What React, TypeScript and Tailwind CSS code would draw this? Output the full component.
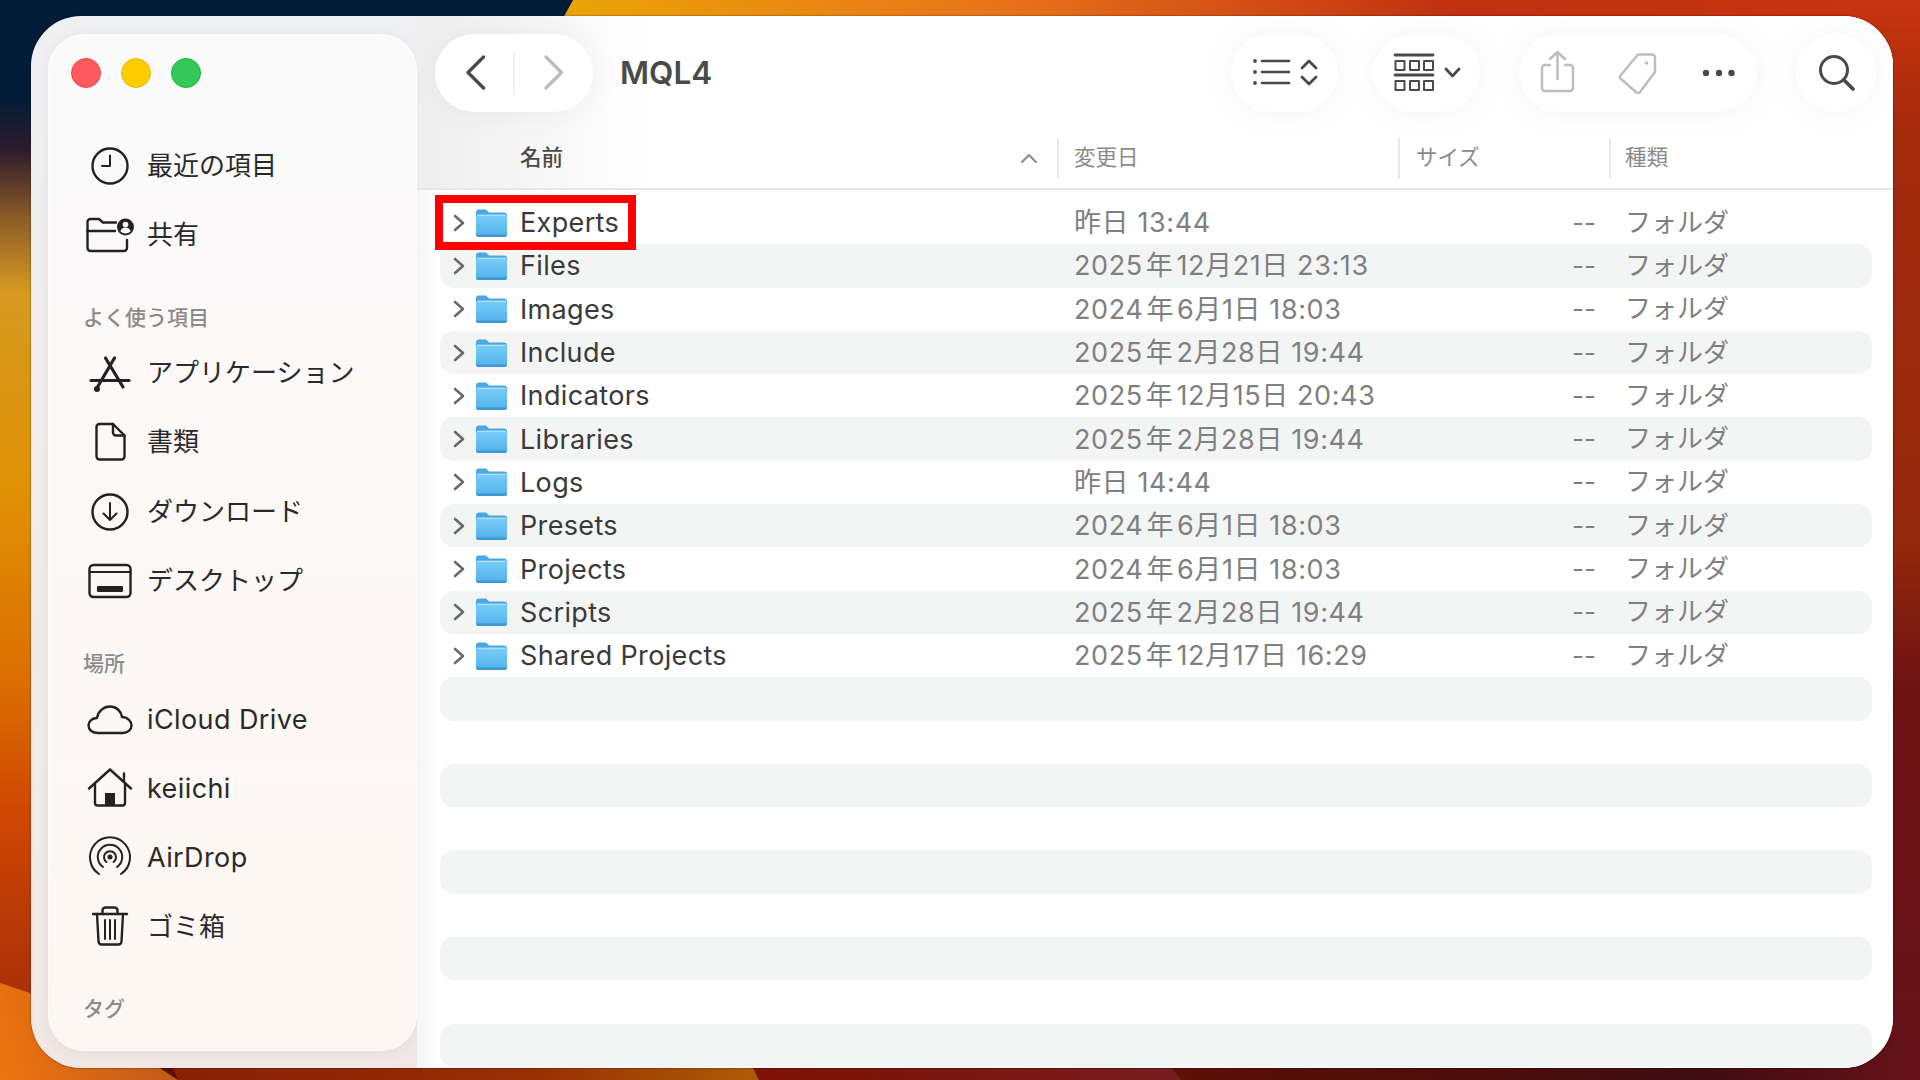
import type { ReactNode } from 'react';

const FOLDERS = [
  { name: 'Experts', date: '昨日 13:44' },
  { name: 'Files', date: '2025年12月21日 23:13' },
  { name: 'Images', date: '2024年6月1日 18:03' },
  { name: 'Include', date: '2025年2月28日 19:44' },
  { name: 'Indicators', date: '2025年12月15日 20:43' },
  { name: 'Libraries', date: '2025年2月28日 19:44' },
  { name: 'Logs', date: '昨日 14:44' },
  { name: 'Presets', date: '2024年6月1日 18:03' },
  { name: 'Projects', date: '2024年6月1日 18:03' },
  { name: 'Scripts', date: '2025年2月28日 19:44' },
  { name: 'Shared Projects', date: '2025年12月17日 16:29' },
];

const ROW_COUNT = 20;
const COLUMNS = 'grid grid-cols-[617px_341px_211px_1fr]';

function Wallpaper() {
  return (
    <svg className="absolute inset-0 h-full w-full" viewBox="0 0 1920 1080" aria-hidden="true">
      <defs>
        <linearGradient id="left" x1="0" y1="0" x2="0" y2="1080" gradientUnits="userSpaceOnUse">
          <stop offset="0.09" stopColor="#001c36" />
          <stop offset="0.14" stopColor="#2f1c2c" />
          <stop offset="0.2" stopColor="#8a5a28" />
          <stop offset="0.27" stopColor="#d69a20" />
          <stop offset="0.45" stopColor="#e09206" />
          <stop offset="0.64" stopColor="#da6c02" />
          <stop offset="0.75" stopColor="#cf4703" />
          <stop offset="0.92" stopColor="#ab3008" />
        </linearGradient>
        <linearGradient id="top" x1="560" y1="0" x2="1920" y2="0" gradientUnits="userSpaceOnUse">
          <stop offset="0" stopColor="#eaa406" />
          <stop offset="0.32" stopColor="#e8741a" />
          <stop offset="0.66" stopColor="#bf3010" />
          <stop offset="1" stopColor="#c8340f" />
        </linearGradient>
        <linearGradient id="right" x1="0" y1="0" x2="0" y2="1080" gradientUnits="userSpaceOnUse">
          <stop offset="0" stopColor="#c8340f" />
          <stop offset="0.12" stopColor="#a52a0c" />
          <stop offset="0.5" stopColor="#93280b" />
          <stop offset="0.64" stopColor="#6e1214" />
          <stop offset="1" stopColor="#66121a" />
        </linearGradient>
        <linearGradient id="bottomA" x1="178" y1="0" x2="759" y2="0" gradientUnits="userSpaceOnUse">
          <stop offset="0" stopColor="#872006" />
          <stop offset="0.6" stopColor="#982e04" />
          <stop offset="1" stopColor="#ad5c06" />
        </linearGradient>
        <linearGradient id="bottomB" x1="759" y1="0" x2="1181" y2="0" gradientUnits="userSpaceOnUse">
          <stop offset="0" stopColor="#7e1204" />
          <stop offset="1" stopColor="#761c1e" />
        </linearGradient>
        <linearGradient id="bottomC" x1="1181" y1="0" x2="1920" y2="0" gradientUnits="userSpaceOnUse">
          <stop offset="0" stopColor="#5c1006" />
          <stop offset="0.7" stopColor="#3e0c10" />
          <stop offset="1" stopColor="#66121a" />
        </linearGradient>
        <linearGradient id="corner" x1="0" y1="1080" x2="180" y2="1020" gradientUnits="userSpaceOnUse">
          <stop offset="0" stopColor="#ef750e" />
          <stop offset="1" stopColor="#b9561c" />
        </linearGradient>
      </defs>
      <rect width="1920" height="1080" fill="#001c36" />
      <rect width="60" height="1080" fill="url(#left)" />
      <polygon points="573,0 1920,0 1920,40 551,40" fill="url(#top)" />
      <rect x="1860" width="60" height="1080" fill="url(#right)" />
      <rect y="1040" width="1920" height="40" fill="url(#bottomC)" />
      <polygon points="160,1040 740,1040 759,1080 178,1080" fill="url(#bottomA)" />
      <polygon points="740,1040 1150,1040 1181,1080 759,1080" fill="url(#bottomB)" />
      <polygon points="0,983 60,1003 178,1080 0,1080" fill="url(#corner)" />
    </svg>
  );
}

function SideIcon({ children }: { children: ReactNode }) {
  return (
    <svg
      className="h-12 w-12 shrink-0"
      viewBox="0 0 48 48"
      fill="none"
      stroke="#222"
      strokeWidth="2.4"
      strokeLinecap="round"
      strokeLinejoin="round"
    >
      {children}
    </svg>
  );
}

function SideRow({ icon, label, latin }: { icon: ReactNode; label: string; latin?: boolean }) {
  return (
    <div className="flex h-[69.2px] items-center gap-[13px] pl-[37px] text-[26px] leading-none text-[#2a2a2a]">
      <SideIcon>{icon}</SideIcon>
      <span className={latin ? 'text-[27px] tracking-[0.4px]' : ''}>{label}</span>
    </div>
  );
}

function SideHeading({ label }: { label: string }) {
  return (
    <div className="flex h-[69.2px] items-end pb-[7px] pl-[34px] text-[21px] leading-[28px] font-medium text-[#8b8b8b]">
      {label}
    </div>
  );
}

function Sidebar() {
  return (
    <aside className="ml-[17px] mt-[18px] h-[1017px] w-[369px] shrink-0 overflow-hidden rounded-[36px] border border-white/70 bg-gradient-to-b from-[#fafafa] to-[#fef6f3] shadow-[0_2px_14px_rgba(60,40,40,0.06)]">
      <div className="flex h-[96px] items-start gap-[20px] pl-[22px] pt-[23px]">
        <span className="h-[30px] w-[30px] rounded-full border border-[#f0444c] bg-[#ff5a5f]" />
        <span className="h-[30px] w-[30px] rounded-full border border-[#eebf00] bg-[#fccb00]" />
        <span className="h-[30px] w-[30px] rounded-full border border-[#12b82f] bg-[#34c759]" />
      </div>
      <SideRow
        label="最近の項目"
        icon={
          <>
            <circle cx="24" cy="24" r="17.5" />
            <path d="M24 13.5V24H16" strokeWidth="2" />
          </>
        }
      />
      <SideRow
        label="共有"
        icon={
          <>
            <path d="M1.5 20V11a3 3 0 0 1 3-3h8.5l4 3.5H30" />
            <path d="M1.5 20H29M1.5 20v17a3 3 0 0 0 3 3H38a3 3 0 0 0 3-3v-8" />
            <circle cx="39.5" cy="16" r="8.5" fill="#222" stroke="none" />
            <circle cx="39.5" cy="13.5" r="2.8" fill="#fafafa" stroke="none" />
            <path d="M34.5 20.5a5 4 0 0 1 10 0a7 7 0 0 1-10 0z" fill="#fafafa" stroke="none" />
          </>
        }
      />
      <SideHeading label="よく使う項目" />
      <SideRow
        label="アプリケーション"
        icon={
          <g strokeWidth="3.2">
            <path d="M19.5 9L37 38" />
            <path d="M28.5 9L11.5 38" />
            <path d="M5 31.500H43" />
            <circle cx="11" cy="40" r="1.4" fill="#222" />
          </g>
        }
      />
      <SideRow
        label="書類"
        icon={
          <>
            <path d="M13.5 6H27L38.5 17.5V38.5a3 3 0 0 1-3 3h-22a3 3 0 0 1-3-3V9a3 3 0 0 1 3-3z" />
            <path d="M27 6v8.5a3 3 0 0 0 3 3h8.5" />
          </>
        }
      />
      <SideRow
        label="ダウンロード"
        icon={
          <>
            <circle cx="24" cy="24" r="17.5" />
            <path d="M24 15V32M17.5 25.5L24 32l6.5-6.5" strokeWidth="2" />
          </>
        }
      />
      <SideRow
        label="デスクトップ"
        icon={
          <>
            <rect x="3.5" y="8" width="41" height="32" rx="4" />
            <path d="M3.5 15H44.5" strokeWidth="2" />
            <rect x="11" y="29" width="26" height="6" rx="1" fill="#222" stroke="none" />
          </>
        }
      />
      <SideHeading label="場所" />
      <SideRow
        label="iCloud Drive"
        latin
        icon={
          <path d="M12 38C6 38 2.500 34.500 2.500 30.500C2.500 26 6.500 23 11 23C12 16 18 11.500 24 11.500C30.500 11.500 35 16 36 22C41.500 22 45.500 26 45.500 30.500C45.500 35 41.500 38 37 38Z" />
        }
      />
      <SideRow
        label="keiichi"
        latin
        icon={
          <>
            <path d="M3 24.500L24 5.500L45 24.500M38 17.500V9.500" />
            <path d="M9 20V39a2.500 2.500 0 0 0 2.500 2.500h25A2.500 2.500 0 0 0 39 39V20" />
            <rect x="19" y="29" width="10" height="12.500" fill="#222" stroke="none" />
          </>
        }
      />
      <SideRow
        label="AirDrop"
        latin
        icon={
          <>
            <path d="M13 41A20 20 0 1 1 35 41" strokeWidth="2" />
            <path d="M17 34A12.200 12.200 0 1 1 31 34" strokeWidth="2" />
            <path d="M20.500 29A6 6 0 1 1 27.500 29" strokeWidth="2" />
            <circle cx="24" cy="24" r="2.500" fill="#222" stroke="none" />
          </>
        }
      />
      <SideRow
        label="ゴミ箱"
        icon={
          <>
            <path d="M7 11H41" />
            <path d="M16.500 11V7.500a3 3 0 0 1 3-3h9a3 3 0 0 1 3 3V11" />
            <path d="M11 11L12.500 38.500a3 3 0 0 0 3 3h17a3 3 0 0 0 3-3L37 11" />
            <path d="M19 17V36M24 17V36M29 17V36" strokeWidth="2" />
          </>
        }
      />
      <SideHeading label="タグ" />
    </aside>
  );
}

function Pill({ width, children }: { width: string; children: ReactNode }) {
  return (
    <div
      className={`flex h-[78px] shrink-0 items-center justify-center rounded-full bg-white shadow-[0_0_34px_rgba(0,0,0,0.055)] ${width}`}
    >
      {children}
    </div>
  );
}

function Toolbar() {
  return (
    <div className="flex h-[96px] items-start pl-[18px] pr-[17px] pt-[18px]">
      <Pill width="w-[158px]">
        <svg width="158" height="78" viewBox="0 0 158 78" fill="none" strokeLinecap="round" strokeLinejoin="round">
          <path d="M48.500 23L33 38.500L48.500 54" stroke="#4a4a4a" strokeWidth="3.400" />
          <path d="M79 18V60" stroke="#ececec" strokeWidth="1.500" />
          <path d="M111 23L126.500 38.500L111 54" stroke="#bdbdbd" strokeWidth="3.400" />
        </svg>
      </Pill>
      <h1 className="ml-[27px] flex h-[78px] items-center text-[31.5px] font-semibold text-[#4a4a4a]">MQL4</h1>
      <div className="flex-1" />
      <Pill width="w-[107px]">
        <svg width="107" height="78" viewBox="0 0 107 78" fill="none" stroke="#4a4a4a" strokeLinecap="round" strokeLinejoin="round">
          <circle cx="24" cy="27" r="1.900" fill="#4a4a4a" stroke="none" />
          <circle cx="24" cy="38" r="1.900" fill="#4a4a4a" stroke="none" />
          <circle cx="24" cy="49" r="1.900" fill="#4a4a4a" stroke="none" />
          <path d="M31 27H58M31 38H58M31 49H58" strokeWidth="2.600" />
          <path d="M71 34L78 27L85 34M71 43L78 50L85 43" strokeWidth="2.800" />
        </svg>
      </Pill>
      <div className="w-[35px]" />
      <Pill width="w-[107px]">
        <svg width="107" height="78" viewBox="0 0 107 78" fill="none" stroke="#4a4a4a" strokeLinecap="round" strokeLinejoin="round">
          <path d="M22 21H60M22 41H60" strokeWidth="2.800" />
          <path d="M22.500 27h9v9h-9zM37 27h9v9h-9zM51 27h9v9h-9zM22.500 47h9v9h-9zM37 47h9v9h-9zM51 47h9v9h-9z" strokeWidth="2" />
          <path d="M73 35L79.500 42L86 35" strokeWidth="2.800" />
        </svg>
      </Pill>
      <div className="w-[39px]" />
      <Pill width="w-[238px]">
        <svg width="238" height="78" viewBox="0 0 238 78" fill="none" strokeLinecap="round" strokeLinejoin="round">
          <path
            d="M31 31H26a3 3 0 0 0-3 3V54a3 3 0 0 0 3 3H51a3 3 0 0 0 3-3V34a3 3 0 0 0-3-3H46M38.500 45V19M31 25L38.500 18L46 25"
            stroke="#bdbdbd"
            strokeWidth="2.500"
          />
          <path
            d="M119 20.500h14a3 3 0 0 1 3 3V38L121 58a2.500 2.500 0 0 1-3.500 .5L102 45a2.500 2.500 0 0 1-.5-3.500z"
            stroke="#bdbdbd"
            strokeWidth="2.500"
          />
          <circle cx="127.500" cy="29" r="1.800" fill="#bdbdbd" />
          <circle cx="187" cy="39" r="3.200" fill="#4a4a4a" />
          <circle cx="200" cy="39" r="3.200" fill="#4a4a4a" />
          <circle cx="212.500" cy="39" r="3.200" fill="#4a4a4a" />
        </svg>
      </Pill>
      <div className="w-[39px]" />
      <Pill width="w-[80px]">
        <svg width="80" height="78" viewBox="0 0 80 78" fill="none" stroke="#4a4a4a" strokeLinecap="round">
          <circle cx="38" cy="36" r="13.500" strokeWidth="3" />
          <path d="M48 46L57 55" strokeWidth="3.800" />
        </svg>
      </Pill>
    </div>
  );
}

function ColumnHeader() {
  const cell = 'flex h-[41px] items-center border-l-2 border-[#e8e8e8] pb-[2px] text-[21.5px] leading-none text-[#8a8a8a]';
  return (
    <div className="border-b-2 border-[#e6e6e6] pb-[9px] pl-[23px] pr-[21px] pt-[26px]">
      <div className={COLUMNS}>
        <div className="relative flex h-[41px] items-center pb-[2px] pl-[80px] text-[21.5px] font-medium leading-none text-[#4a4a4a]">
          名前
          <svg className="absolute right-[19px] top-[14px]" width="18" height="12" viewBox="0 0 18 12" fill="none">
            <path d="M2 10L9 3L16 10" stroke="#8a8a8a" strokeWidth="2" strokeLinecap="round" strokeLinejoin="round" />
          </svg>
        </div>
        <div className={`${cell} pl-[15px]`}>変更日</div>
        <div className={`${cell} pl-[16px]`}>サイズ</div>
        <div className={`${cell} pl-[14px]`}>種類</div>
      </div>
    </div>
  );
}

function FolderIcon() {
  return (
    <svg width="31" height="28" viewBox="0 0 31 28" className="shrink-0">
      <defs>
        <linearGradient id="folderFront" x1="0" y1="0" x2="0" y2="1">
          <stop offset="0" stopColor="#78cdf8" />
          <stop offset="1" stopColor="#4fb0ea" />
        </linearGradient>
      </defs>
      <path d="M0 3.500A3 3 0 0 1 3 .5h7l3 3h15a3 3 0 0 1 3 3V25a3 3 0 0 1-3 3H3a3 3 0 0 1-3-3z" fill="#4aa7e2" />
      <path d="M0 9a2.500 2.500 0 0 1 2.500-2.500h26A2.500 2.500 0 0 1 31 9V25a3 3 0 0 1-3 3H3a3 3 0 0 1-3-3z" fill="url(#folderFront)" />
      <path d="M0 25.500h31V25a3 3 0 0 1-3 3H3a3 3 0 0 1-3-3z" fill="#3f98d4" />
      <path d="M1 6.200H30" stroke="#d4effd" strokeWidth="1" />
    </svg>
  );
}

function DateText({ value }: { value: string }) {
  const parts = value.split('年');
  if (parts.length === 1) return <>{value}</>;
  return (
    <>
      {parts[0]}
      <span className="mx-[3px]">年</span>
      {parts[1]}
    </>
  );
}

function FileRows() {
  return (
    <div className="pl-[23px] pr-[21px] pt-[11px]">
      {Array.from({ length: ROW_COUNT }, (_, index) => {
        const folder = FOLDERS[index];
        return (
          <div
            key={index}
            className={`${COLUMNS} relative h-[43.3px] items-center rounded-[14px] text-[26px] leading-none ${
              index % 2 === 1 ? 'bg-[#f3f5f4]' : ''
            }`}
          >
            {folder && (
              <>
                <div className="flex items-center pl-[13px] text-[#3a3a3a]">
                  <svg width="12" height="18" viewBox="0 0 12 18" fill="none" className="shrink-0">
                    <path d="M2 2L10 9L2 16" stroke="#6a6a6a" strokeWidth="2.600" strokeLinecap="round" strokeLinejoin="round" />
                  </svg>
                  <span className="ml-[11px] flex">
                    <FolderIcon />
                  </span>
                  <span className="ml-[13px] text-[27px] tracking-[0.35px]">{folder.name}</span>
                </div>
                <div className="whitespace-nowrap pl-[17px] text-[27px] tracking-[0.6px] text-[#808080]">
                  <DateText value={folder.date} />
                </div>
                <div className="pr-[13px] text-right text-[#808080]">--</div>
                <div className="pl-[16px] text-[#808080]">フォルダ</div>
                {index === 0 && (
                  <div className="absolute left-[-5px] top-[-6px] z-10 h-[55px] w-[201px] border-[8px] border-[#ff0000]" />
                )}
              </>
            )}
          </div>
        );
      })}
    </div>
  );
}

export default function App() {
  return (
    <div className="relative h-[1080px] w-[1920px] overflow-hidden pl-[31px] pt-[16px] font-[Inter,'Noto_Sans_CJK_JP',sans-serif]">
      <Wallpaper />
      <div className="relative flex h-[1052px] w-[1862px] overflow-hidden rounded-[50px] bg-gradient-to-b from-[#eff0f2] to-[#f1e8e5] shadow-[0_0_2px_rgba(0,0,0,0.6)]">
        <Sidebar />
        <main className="ml-0 flex-1 overflow-hidden bg-[linear-gradient(90deg,#f4f5f5,#ffffff_23px)]">
          <div className="bg-[linear-gradient(90deg,#eeeeee,#ffffff_230px)]">
            <Toolbar />
            <ColumnHeader />
          </div>
          <FileRows />
        </main>
      </div>
    </div>
  );
}
